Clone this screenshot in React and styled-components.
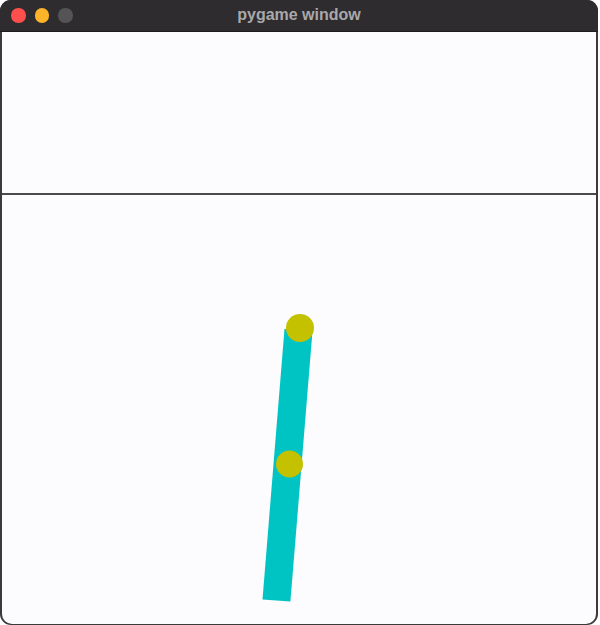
import React from "react";
import styled, { createGlobalStyle } from "styled-components";

const Global = createGlobalStyle`
  html, body { margin: 0; padding: 0; background: #ffffff; }
  #root { width: 600px; height: 625px; }
`;

const Window = styled.div`
  width: 598px;
  height: 625px;
  box-sizing: border-box;
  border-radius: 11px;
  background: #3a393b;
  padding: 0 2px 1px 2px;
  display: flex;
  flex-direction: column;
  overflow: hidden;
`;

const TitleBar = styled.div`
  height: 31px;
  margin: 0 -2px;
  background: #2e2c2f;
  border-bottom: 1px solid #1c1b1d;
  display: flex;
  align-items: center;
  position: relative;
  flex-shrink: 0;
`;

const Lights = styled.div`
  display: flex;
  gap: 9px;
  padding-left: 11px;
`;

const Light = styled.span`
  width: 14.5px;
  height: 14.5px;
  border-radius: 50%;
  background: ${(p) => p.$color};
`;

const Title = styled.div`
  position: absolute;
  left: 0;
  right: 0;
  top: 0;
  bottom: 1px;
  display: flex;
  align-items: center;
  justify-content: center;
  font-family: "Liberation Sans", Arial, sans-serif;
  font-weight: 700;
  font-size: 16px;
  color: #a9a8ab;
  pointer-events: none;
`;

const Content = styled.div`
  flex: 1;
  background: #fcfbfd;
  border-radius: 0 0 10px 10px;
  display: flex;
  flex-direction: column;
  overflow: hidden;
`;

const TopArea = styled.div`
  height: 161px;
  flex-shrink: 0;
`;

const Divider = styled.div`
  height: 2px;
  background: #4a4a4c;
  flex-shrink: 0;
`;

const Canvas = styled.svg`
  display: block;
  flex: 1;
`;

export default function App() {
  const teal = "#00c3c3";
  const olive = "#c3c100";
  return (
    <>
      <Global />
      <Window>
        <TitleBar>
          <Lights>
            <Light $color="#ff4f4d" />
            <Light $color="#fdb42b" />
            <Light $color="#545355" />
          </Lights>
          <Title>pygame window</Title>
        </TitleBar>
        <Content>
          <TopArea />
          <Divider />
          <Canvas width="594" height="429" viewBox="2 195 594 429">
            <polygon
              points="284.5,328.9 312.5,331.1 290.4,601.6 262.5,599.4"
              fill={teal}
            />
            <circle cx="300" cy="328" r="14" fill={olive} />
            <circle cx="289.5" cy="464" r="13.5" fill={olive} />
          </Canvas>
        </Content>
      </Window>
    </>
  );
}
